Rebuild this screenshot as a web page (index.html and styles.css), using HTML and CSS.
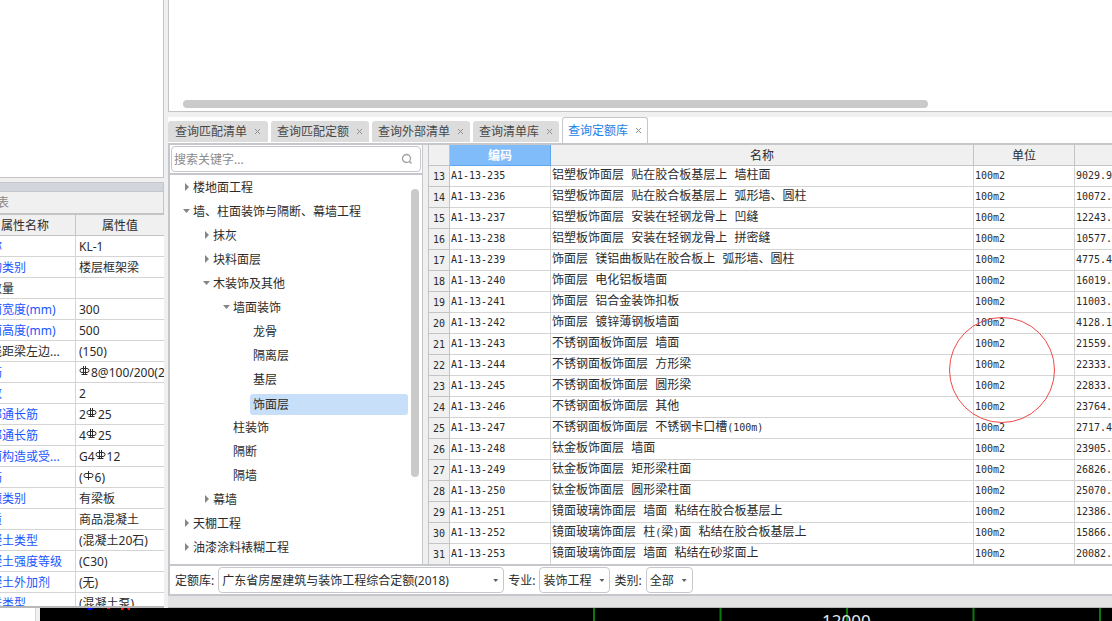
FILE: index.html
```html
<!DOCTYPE html>
<html lang="zh-CN">
<head>
<meta charset="utf-8">
<title>查询定额库</title>
<link rel="stylesheet" href="styles.css">
</head>
<body>
<svg class="defs" aria-hidden="true">
  <symbol id="close" viewBox="0 0 7 7"><path d="M1 1l5 5M6 1l-5 5" fill="none" stroke="currentColor"/></symbol>
  <symbol id="rebar3" viewBox="0 0 12 12"><path d="M4.500 0v9M6.500 0v9M3 2.500h5q2 0 2 2t-2 2h-5q-2 0-2-2t2-2zM2.500 8.500h6" fill="none" stroke="currentColor"/></symbol>
  <symbol id="rebar1" viewBox="0 0 12 12"><path d="M5.500 0v9M3 2.500h5q2 0 2 2t-2 2h-5q-2 0-2-2t2-2z" fill="none" stroke="currentColor"/></symbol>
</svg>
<div class="app">
  <div class="workspace">
    <aside class="side">
      <div class="side-top"></div>
      <section class="props">
        <div class="grip"></div>
        <h2 class="props-title">属性列表</h2>
        <div class="props-scroll">
        <table class="props-table">
          <thead><tr><th class="p-no"></th><th class="p-name">属性名称</th><th>属性值</th></tr></thead>
          <tbody>
            <tr><td></td><td class="key">名称</td><td>KL-1</td></tr>
            <tr><td></td><td class="key">结构类别</td><td>楼层框架梁</td></tr>
            <tr><td></td><td>跨数量</td><td></td></tr>
            <tr><td></td><td class="key">截面宽度(mm)</td><td>300</td></tr>
            <tr><td></td><td class="key">截面高度(mm)</td><td>500</td></tr>
            <tr><td></td><td>轴线距梁左边...</td><td>(150)</td></tr>
            <tr><td></td><td class="key">箍筋</td><td><svg class="rebar"><use href="#rebar3"/></svg>8@100/200(2)</td></tr>
            <tr><td></td><td class="key">肢数</td><td>2</td></tr>
            <tr><td></td><td class="key">上部通长筋</td><td>2<svg class="rebar"><use href="#rebar3"/></svg>25</td></tr>
            <tr><td></td><td class="key">下部通长筋</td><td>4<svg class="rebar"><use href="#rebar3"/></svg>25</td></tr>
            <tr><td></td><td class="key">侧面构造或受...</td><td>G4<svg class="rebar"><use href="#rebar3"/></svg>12</td></tr>
            <tr><td></td><td class="key">拉筋</td><td>(<svg class="rebar"><use href="#rebar1"/></svg>6)</td></tr>
            <tr><td></td><td class="key">定额类别</td><td>有梁板</td></tr>
            <tr><td></td><td class="key">材质</td><td>商品混凝土</td></tr>
            <tr><td></td><td class="key">混凝土类型</td><td>(混凝土20石)</td></tr>
            <tr><td></td><td class="key">混凝土强度等级</td><td>(C30)</td></tr>
            <tr><td></td><td class="key">混凝土外加剂</td><td>(无)</td></tr>
            <tr><td></td><td class="key">泵送类型</td><td>(混凝土泵)</td></tr>
          </tbody>
        </table>
        </div>
      </section>
    </aside>
    <main class="main">
      <div class="main-top"><div class="hbar"></div></div>
      <nav class="tabs">
        <button class="tab">查询匹配清单<svg><use href="#close"/></svg></button>
        <button class="tab">查询匹配定额<svg><use href="#close"/></svg></button>
        <button class="tab">查询外部清单<svg><use href="#close"/></svg></button>
        <button class="tab">查询清单库<svg><use href="#close"/></svg></button>
        <button class="tab active">查询定额库<svg><use href="#close"/></svg></button>
      </nav>
      <div class="query">
        <div class="panes">
          <section class="tree-pane">
            <div class="search">
              <input class="search-input" type="text" placeholder="搜索关键字..." aria-label="搜索关键字">
              <svg class="search-icon" viewBox="0 0 12 12"><circle cx="5.500" cy="5.500" r="4" fill="none" stroke="currentColor" stroke-width="1.300"/><path d="M8.500 8.500l2 2" stroke="currentColor" stroke-width="1.500"/></svg>
            </div>
            <div class="tree-body">
              <ul class="tree">
                <li class="closed">楼地面工程</li>
                <li class="open">墙、柱面装饰与隔断、幕墙工程</li>
                <li class="closed l1">抹灰</li>
                <li class="closed l1">块料面层</li>
                <li class="open l1">木装饰及其他</li>
                <li class="open l2">墙面装饰</li>
                <li class="l3">龙骨</li>
                <li class="l3">隔离层</li>
                <li class="l3">基层</li>
                <li class="l3"><span class="picked">饰面层</span></li>
                <li class="l2">柱装饰</li>
                <li class="l2">隔断</li>
                <li class="l2">隔墙</li>
                <li class="closed l1">幕墙</li>
                <li class="closed">天棚工程</li>
                <li class="closed">油漆涂料裱糊工程</li>
              </ul>
              <div class="vbar"></div>
            </div>
          </section>
          <section class="grid-pane">
            <table class="grid">
              <thead><tr><th class="c-no"></th><th class="c-code">编码</th><th>名称</th><th class="c-unit">单位</th><th class="c-price"></th></tr></thead>
              <tbody>
                <tr><th>13</th><td class="mono">A1-13-235</td><td>铝塑板饰面层 贴在胶合板基层上 墙柱面</td><td class="mono">100m2</td><td class="mono">9029.9</td></tr>
                <tr><th>14</th><td class="mono">A1-13-236</td><td>铝塑板饰面层 贴在胶合板基层上 弧形墙、圆柱</td><td class="mono">100m2</td><td class="mono">10072.</td></tr>
                <tr><th>15</th><td class="mono">A1-13-237</td><td>铝塑板饰面层 安装在轻钢龙骨上 凹缝</td><td class="mono">100m2</td><td class="mono">12243.</td></tr>
                <tr><th>16</th><td class="mono">A1-13-238</td><td>铝塑板饰面层 安装在轻钢龙骨上 拼密缝</td><td class="mono">100m2</td><td class="mono">10577.</td></tr>
                <tr><th>17</th><td class="mono">A1-13-239</td><td>饰面层 镁铝曲板贴在胶合板上 弧形墙、圆柱</td><td class="mono">100m2</td><td class="mono">4775.4</td></tr>
                <tr><th>18</th><td class="mono">A1-13-240</td><td>饰面层 电化铝板墙面</td><td class="mono">100m2</td><td class="mono">16019.</td></tr>
                <tr><th>19</th><td class="mono">A1-13-241</td><td>饰面层 铝合金装饰扣板</td><td class="mono">100m2</td><td class="mono">11003.</td></tr>
                <tr><th>20</th><td class="mono">A1-13-242</td><td>饰面层 镀锌薄钢板墙面</td><td class="mono">100m2</td><td class="mono">4128.1</td></tr>
                <tr><th>21</th><td class="mono">A1-13-243</td><td>不锈钢面板饰面层 墙面</td><td class="mono">100m2</td><td class="mono">21559.</td></tr>
                <tr><th>22</th><td class="mono">A1-13-244</td><td>不锈钢面板饰面层 方形梁</td><td class="mono">100m2</td><td class="mono">22333.</td></tr>
                <tr><th>23</th><td class="mono">A1-13-245</td><td>不锈钢面板饰面层 圆形梁</td><td class="mono">100m2</td><td class="mono">22833.</td></tr>
                <tr><th>24</th><td class="mono">A1-13-246</td><td>不锈钢面板饰面层 其他</td><td class="mono">100m2</td><td class="mono">23764.</td></tr>
                <tr><th>25</th><td class="mono">A1-13-247</td><td>不锈钢面板饰面层 不锈钢卡口槽<span class="mono">(100m)</span></td><td class="mono">100m2</td><td class="mono">2717.4</td></tr>
                <tr><th>26</th><td class="mono">A1-13-248</td><td>钛金板饰面层 墙面</td><td class="mono">100m2</td><td class="mono">23905.</td></tr>
                <tr><th>27</th><td class="mono">A1-13-249</td><td>钛金板饰面层 矩形梁柱面</td><td class="mono">100m2</td><td class="mono">26826.</td></tr>
                <tr><th>28</th><td class="mono">A1-13-250</td><td>钛金板饰面层 圆形梁柱面</td><td class="mono">100m2</td><td class="mono">25070.</td></tr>
                <tr><th>29</th><td class="mono">A1-13-251</td><td>镜面玻璃饰面层 墙面 粘结在胶合板基层上</td><td class="mono">100m2</td><td class="mono">12386.</td></tr>
                <tr><th>30</th><td class="mono">A1-13-252</td><td>镜面玻璃饰面层 柱<span class="mono">(</span>梁<span class="mono">)</span>面 粘结在胶合板基层上</td><td class="mono">100m2</td><td class="mono">15866.</td></tr>
                <tr><th>31</th><td class="mono">A1-13-253</td><td>镜面玻璃饰面层 墙面 粘结在砂浆面上</td><td class="mono">100m2</td><td class="mono">20082.</td></tr>
              </tbody>
            </table>
            <svg class="mark" viewBox="0 0 108 108"><circle cx="54" cy="54" r="52.500" fill="none" stroke="#f04848"/></svg>
          </section>
        </div>
        <form class="filters">
          <label for="lib">定额库:</label>
          <span class="pick wide"><select id="lib"><option>广东省房屋建筑与装饰工程综合定额(2018)</option></select></span>
          <label for="major">专业:</label>
          <span class="pick mid"><select id="major"><option>装饰工程</option></select></span>
          <label for="kind">类别:</label>
          <span class="pick small"><select id="kind"><option>全部</option></select></span>
        </form>
      </div>
      <div class="strip"></div>
    </main>
  </div>
  <div class="drawing">
    <div class="ruler"></div>
    <div class="canvas">
      <svg class="lines" aria-hidden="true">
        <path d="M554 0v14M680.500 0v14M807 0v14M933.500 0v14M1060 0v14" stroke="#0a7a0a" stroke-width="2"/>
        <path d="M47 0h6l-1 2h-4z" fill="#0000ff"/>
        <path d="M67 0h3v1h-3zM81 0h3l-1 2h-2zM87 0h3v2h-2z" fill="#ff1010"/>
      </svg>
      <span class="dim">12000</span>
    </div>
  </div>
</div>
</body>
</html>
```

FILE: styles.css
```css
* { box-sizing: border-box; }
body {
  margin: 0;
  height: 100vh;
  overflow: hidden;
  background: #f0f0f0;
  color: #2b2b2b;
  font: 12px/20px "Noto Sans", "Noto Sans CJK SC", sans-serif;
}
button, input, select { font: inherit; color: inherit; }
.defs { display: none; }
.app { display: flex; flex-direction: column; height: 100vh; }
.workspace { display: flex; flex: 1; min-height: 0; gap: 4px; }

/* property list, its first columns scrolled out at the left */
.side {
  display: flex;
  flex-direction: column;
  gap: 4px;
  flex: none;
  width: 204px;
  margin-left: -40px;
  border-bottom: 2px solid #b8b8b8;
}
.side-top {
  flex: none;
  height: 178px;
  background: #fff;
  border: solid #c4c4c4;
  border-width: 0 1px 1px 0;
}
.props { display: flex; flex-direction: column; flex: 1; min-height: 0; }
.grip {
  flex: none;
  height: 10px;
  background: #d3d5dc;
  border: 1px solid #c3c5ca;
}
.props-title {
  flex: none;
  margin: 0;
  padding: 0 1px;
  border-right: 1px solid #c4c4c4;
  border-bottom: 2px solid #c4c4c4;
  color: #8a8a8a;
  font-size: 12px;
  font-weight: 400;
  line-height: 21px;
}
.props-scroll { flex: 1; min-height: 0; overflow: hidden; background: #fff; }
.props-table, .grid {
  width: 100%;
  table-layout: fixed;
  border-collapse: separate;
  border-spacing: 0;
}
.props-table th, .props-table td {
  height: 21px;
  padding: 2px 3px 0;
  border: solid #d4d4d4;
  border-width: 0 1px 1px 0;
  overflow: hidden;
  white-space: nowrap;
  text-align: left;
  font-weight: 400;
  line-height: 18px;
}
.props-table th { background: #f0f0f0; border-color: #c4c4c4; text-align: center; }
.props-table tr > :last-child { border-right: 0; }
.props-table .p-no { width: 15px; }
.props-table .p-name { width: 101px; }
.props-table td.key { color: #1a56ff; }
.rebar { width: 12px; height: 12px; vertical-align: -1px; }

/* upper panel and tabs */
.main { display: flex; flex-direction: column; flex: 1; min-width: 0; }
.main-top {
  flex: none;
  display: flex;
  align-items: flex-end;
  height: 112px;
  padding: 0 184px 3px 14px;
  background: #fff;
  border: solid #c4c4c4;
  border-width: 0 0 1px 1px;
}
.hbar { flex: 1; height: 8px; border-radius: 4px; background: #cacaca; }
.tabs {
  flex: none;
  display: flex;
  align-items: flex-end;
  gap: 3px;
  height: 28px;
  margin-top: 5px;
  background: #fff;
  border-bottom: 2px solid #c5c7ca;
}
.tab {
  display: flex;
  align-items: center;
  gap: 7px;
  height: 21px;
  margin-bottom: 1px;
  padding: 0 6px;
  border: 0;
  border-radius: 3px 3px 0 0;
  background: #dcdcdc;
  color: #484848;
}
.tab:first-child { padding: 0 7px; }
.tab svg { width: 7px; height: 7px; color: #8f8f8f; }
.tab.active {
  height: 26px;
  margin-bottom: 0;
  border: 1px solid #c5c7ca;
  border-bottom: 0;
  padding: 0 5px;
  background: #fff;
  color: #1b7fe6;
}

/* tree and grid */
.query {
  display: flex;
  flex-direction: column;
  flex: 1;
  min-height: 0;
  border: solid #c5c7cc;
  border-width: 0 0 2px 2px;
  background: #fff;
}
.panes { display: flex; flex: 1; min-height: 0; gap: 5px; background: #f0f0f0; border-bottom: 2px solid #c5c7ca; }
.tree-pane {
  display: flex;
  flex-direction: column;
  flex: none;
  width: 253px;
  background: #fff;
  border-right: 1px solid #c5c7cc;
}
.search {
  flex: none;
  display: flex;
  align-items: center;
  height: 26px;
  margin: 1px;
  padding: 0 7px 0 2px;
  border: 1px solid #c5c7ca;
  border-radius: 4px;
}
.search-input {
  flex: 1;
  min-width: 0;
  padding: 2px 0 0;
  border: 0;
  outline: 0;
  background: none;
}
.search-input::placeholder { color: #8a8a8a; opacity: 1; }
.search-icon { width: 12px; height: 12px; color: #a0a0a0; }
.tree-body {
  display: flex;
  flex: 1;
  min-height: 0;
  gap: 3px;
  padding-right: 3px;
  border-top: 2px solid #c5c7cc;
}
.tree { flex: 1; margin: 0; padding: 0 0 0 12px; list-style: none; }
.tree li {
  display: flex;
  align-items: center;
  height: 24px;
  padding-top: 2px;
  line-height: 22px;
  white-space: nowrap;
}
.tree li::before { content: ""; flex: none; width: 11px; }
.tree .l1 { padding-left: 20px; }
.tree .l2 { padding-left: 40px; }
.tree .l3 { padding-left: 60px; }
.tree .closed::before {
  width: 4px;
  height: 8px;
  margin: 0 4px 2px 3px;
  background: #858585;
  clip-path: polygon(0 0, 100% 50%, 0 100%);
}
.tree .open::before {
  width: 7px;
  height: 4px;
  margin: 0 3px 2px 1px;
  background: #858585;
  clip-path: polygon(0 0, 100% 0, 50% 100%);
}
.picked {
  flex: 1;
  height: 21px;
  margin-left: -3px;
  padding-left: 3px;
  border-radius: 3px;
  background: #c8dffa;
  line-height: 21px;
}
.vbar { height: 288px; width: 8px; margin-top: 14px; border-radius: 4px; background: #cacaca; }
.grid-pane { position: relative; flex: 1; min-width: 0; background: #fff; overflow: hidden; border-left: 1px solid #c4c4c4; }
.grid th, .grid td {
  height: 21px;
  padding: 0 0 0 2px;
  border: solid #d4d4d4;
  border-width: 0 1px 1px 0;
  overflow: hidden;
  white-space: nowrap;
  text-align: left;
  font-weight: 400;
}
.grid td { padding-left: 1px; font-family: "Liberation Mono", "Noto Sans CJK SC", monospace; }
.grid .mono, .grid tbody th { font-family: "DejaVu Sans Mono", monospace; font-size: 10px; }
.grid thead th { padding: 2px 0 0; background: #f0f0f0; border-color: #c4c4c4; text-align: center; line-height: 18px; }
.grid tbody th { padding: 2px 0 0; background: #f0f0f0; border-color: #c4c4c4; text-align: center; line-height: 18px; }
.grid .c-no { width: 21px; }
.grid .c-code { width: 101px; }
.grid .c-unit { width: 101px; }
.grid .c-price { width: 37px; }
.grid thead .c-code { background: #80bbfa; border-color: #60a5ee; color: #fff; font-weight: 700; }
.grid tr > :last-child { border-right: 0; }
.mark { position: absolute; top: 171px; right: 56px; width: 108px; height: 108px; }

/* filter bar */
.filters { flex: none; display: flex; align-items: center; gap: 4px; height: 28px; padding-left: 5px; }
.filters label { padding-top: 1px; }
.pick { position: relative; display: flex; height: 26px; }
.pick::after {
  content: "";
  position: absolute;
  right: 6px;
  top: 12px;
  width: 5px;
  height: 3px;
  background: #5a5f68;
  clip-path: polygon(0 0, 100% 0, 50% 100%);
  pointer-events: none;
}
.pick select {
  appearance: none;
  width: 100%;
  padding: 2px 0 0 3px;
  border: 1px solid #c5c7ca;
  border-radius: 4px;
  background: #fff;
}
.wide { width: 286px; }
.mid { width: 71px; }
.small { width: 47px; }
.strip { flex: none; height: 12px; background: #e3e3e3; border-bottom: 1px solid #b8b8b8; }

/* drawing area under the panels */
.drawing { flex: none; display: flex; height: 13px; }
.ruler { width: 36px; background: #fff; border-right: 1px solid #d8d8d8; margin-right: 4px; }
.canvas { position: relative; flex: 1; overflow: hidden; background: #000; }
.lines { display: block; width: 100%; height: 13px; }
.dim {
  position: absolute;
  left: 782px;
  top: 1px;
  color: #e8e8e8;
  font-size: 17px;
  line-height: 24px;
}
```
